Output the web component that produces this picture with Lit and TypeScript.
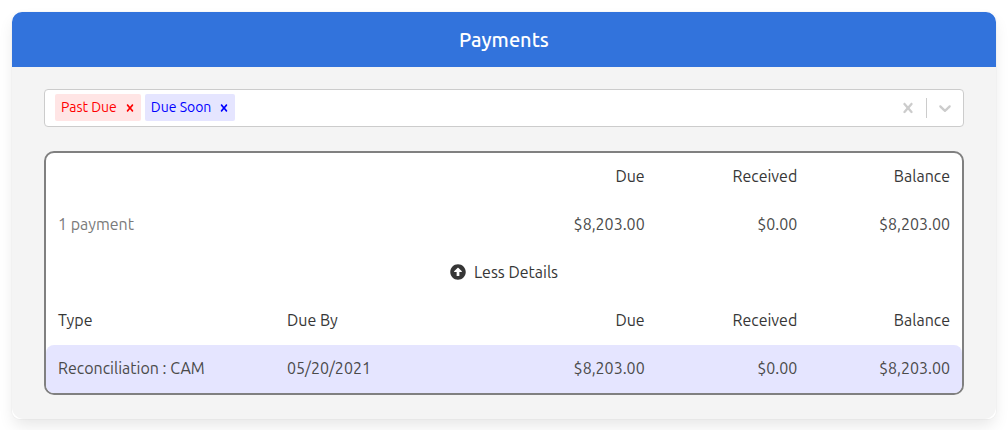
import { LitElement, html, css, svg } from "lit";
import { customElement, property, state } from "lit/decorators.js";

const cross = svg`<path d="M14.348 14.849c-0.469 0.469-1.229 0.469-1.697 0l-2.651-3.030-2.651 3.029c-0.469 0.469-1.229 0.469-1.697 0-0.469-0.469-0.469-1.229 0-1.697l2.758-3.15-2.759-3.152c-0.469-0.469-0.469-1.228 0-1.697s1.228-0.469 1.697 0l2.652 3.031 2.651-3.031c0.469-0.469 1.228-0.469 1.697 0s0.469 1.229 0 1.697l-2.758 3.152 2.758 3.15c0.469 0.469 0.469 1.229 0 1.698z"/>`;
const chevron = svg`<path d="M4.516 7.548c0.436-0.446 1.043-0.481 1.576 0l3.908 3.747 3.908-3.747c0.533-0.481 1.141-0.446 1.574 0 0.436 0.445 0.408 1.197 0 1.615-0.406 0.418-4.695 4.502-4.695 4.502-0.217 0.223-0.502 0.335-0.787 0.335s-0.57-0.112-0.789-0.335c0 0-4.287-4.084-4.695-4.502s-0.436-1.17 0-1.615z"/>`;

interface Filter {
  label: string;
  tone: "late" | "soon";
}

@customElement("payment-filter")
class PaymentFilter extends LitElement {
  @property({ attribute: false }) filters: Filter[] = [];

  static styles = css`
    :host {
      display: block;
    }
    .control {
      display: flex;
      align-items: center;
      min-height: 36px;
      border: 1px solid #ccc;
      border-radius: 4px;
      background: #fff;
    }
    .values {
      display: flex;
      flex: 1;
      flex-wrap: wrap;
      align-items: center;
      gap: 4px;
      padding: 4px 10px 5px;
      min-width: 0;
    }
    .chip {
      display: flex;
      border-radius: 2px;
      font-size: 14px;
      line-height: 21px;
    }
    .late {
      background: #ffe5e5;
      color: #f00;
    }
    .soon {
      background: #e5e5ff;
      color: #00f;
    }
    .label {
      padding: 3px 2px 3px 6px;
    }
    button {
      display: flex;
      align-items: center;
      border: 0;
      background: none;
      color: inherit;
      cursor: pointer;
    }
    .remove {
      padding: 0 4px;
    }
    .indicator {
      padding: 8px;
      color: #ccc;
    }
    svg {
      display: block;
      fill: currentColor;
    }
    .divider {
      align-self: stretch;
      width: 1px;
      margin: 8px 0;
      background: #ccc;
    }
    .search {
      flex: 1;
      min-width: 2px;
      padding: 0;
      border: 0;
      outline: 0;
      background: none;
      font: inherit;
      line-height: 20px;
      height: 20px;
    }
  `;

  private keep(filters: Filter[]) {
    this.filters = filters;
  }

  render() {
    return html`
      <div class="control">
        <div class="values">
          ${this.filters.map(
            (f) => html`
              <div class="chip ${f.tone}">
                <span class="label">${f.label}</span>
                <button
                  class="remove"
                  aria-label="Remove ${f.label}"
                  @click=${() => this.keep(this.filters.filter((o) => o !== f))}
                >
                  <svg width="14" height="14" viewBox="0 0 20 20">${cross}</svg>
                </button>
              </div>
            `
          )}
          <input class="search" type="text" role="combobox" aria-expanded="false" aria-label="Filter payments" />
        </div>
        <button class="indicator" aria-label="Clear filters" @click=${() => this.keep([])}>
          <svg width="20" height="20" viewBox="0 0 20 20">${cross}</svg>
        </button>
        <span class="divider"></span>
        <button class="indicator" aria-label="Show filters">
          <svg width="20" height="20" viewBox="0 0 20 20">${chevron}</svg>
        </button>
      </div>
    `;
  }
}

@customElement("app-root")
class AppRoot extends LitElement {
  @state() private open = true;

  private filters: Filter[] = [
    { label: "Past Due", tone: "late" },
    { label: "Due Soon", tone: "soon" },
  ];

  private payments = [
    { type: "Reconciliation : CAM", by: "05/20/2021", due: "$8,203.00", received: "$0.00", balance: "$8,203.00" },
  ];

  static styles = css`
    :host {
      display: block;
      padding: 12px;
      font-family: Ubuntu, "Noto Sans", sans-serif;
      font-size: 16px;
      line-height: 24px;
      color: #4a4a4a;
      text-rendering: optimizeLegibility;
    }
    .card {
      border-radius: 8px;
      background: #fff;
      box-shadow: 0 8px 16px -2px rgba(10, 10, 10, 0.1), 0 0 0 1px rgba(10, 10, 10, 0.02);
    }
    .title {
      margin: 0;
      padding: 14px 16px;
      border-radius: 10px 10px 0 0;
      background: #3273dc;
      color: #fff;
      font-size: 20px;
      font-weight: 500;
      line-height: 27px;
      text-align: center;
    }
    .body {
      display: flex;
      flex-direction: column;
      gap: 24px;
      padding: 22px 32px 24px;
      border-radius: 0 0 12px 12px;
      background: #f4f4f4;
    }
    .box {
      border: 2px solid #808080;
      border-radius: 10px;
      background: #fff;
    }
    table {
      width: 100%;
      table-layout: fixed;
      border-collapse: separate;
      border-spacing: 0;
    }
    .wide {
      width: 25%;
    }
    th,
    td {
      padding: 11px 12px 13px;
      text-align: left;
      font-weight: 400;
    }
    th {
      color: #363636;
    }
    .amount {
      text-align: right;
    }
    .count {
      color: #7a7a7a;
    }
    .soon td {
      background: #e5e5ff;
    }
    .soon td:first-child {
      border-radius: 8px 0 0 8px;
    }
    .soon td:last-child {
      border-radius: 0 8px 8px 0;
    }
    .toggle {
      display: flex;
      align-items: center;
      justify-content: center;
      gap: 8px;
      width: 100%;
      padding: 11px 12px 13px;
      border: 0;
      background: none;
      color: #363636;
      font: inherit;
      cursor: pointer;
    }
    .toggle svg {
      fill: currentColor;
    }
  `;

  private columns() {
    return html`<colgroup>
      <col class="wide" />
      <col class="wide" />
      <col />
      <col />
      <col />
    </colgroup>`;
  }

  render() {
    return html`
      <section class="card">
        <h2 class="title">Payments</h2>
        <div class="body">
          <payment-filter .filters=${this.filters}></payment-filter>
          <div class="box">
            <table>
              ${this.columns()}
              <thead>
                <tr>
                  <td colspan="2"></td>
                  <th class="amount" scope="col">Due</th>
                  <th class="amount" scope="col">Received</th>
                  <th class="amount" scope="col">Balance</th>
                </tr>
              </thead>
              <tbody>
                <tr>
                  <td class="count" colspan="2">1 payment</td>
                  <td class="amount">$8,203.00</td>
                  <td class="amount">$0.00</td>
                  <td class="amount">$8,203.00</td>
                </tr>
              </tbody>
            </table>
            <button class="toggle" aria-expanded=${this.open} @click=${() => (this.open = !this.open)}>
              <svg width="16" height="16" viewBox="0 0 512 512">
                <path
                  d="M8 256C8 119 119 8 256 8s248 111 248 248-111 248-248 248S8 393 8 256zm292 116V256h70.9c10.7 0 16.1-13 8.5-20.5L264.5 121.2c-4.7-4.7-12.2-4.7-16.9 0l-115 114.3c-7.6 7.6-2.2 20.5 8.5 20.5H212v116c0 6.6 5.4 12 12 12h64c6.6 0 12-5.4 12-12z"
                />
              </svg>
              <span>${this.open ? "Less Details" : "More Details"}</span>
            </button>
            ${this.open
              ? html`<table>
                  ${this.columns()}
                  <thead>
                    <tr>
                      <th scope="col">Type</th>
                      <th scope="col">Due By</th>
                      <th class="amount" scope="col">Due</th>
                      <th class="amount" scope="col">Received</th>
                      <th class="amount" scope="col">Balance</th>
                    </tr>
                  </thead>
                  <tbody>
                    ${this.payments.map(
                      (p) => html`<tr class="soon">
                        <td>${p.type}</td>
                        <td>${p.by}</td>
                        <td class="amount">${p.due}</td>
                        <td class="amount">${p.received}</td>
                        <td class="amount">${p.balance}</td>
                      </tr>`
                    )}
                  </tbody>
                </table>`
              : ""}
          </div>
        </div>
      </section>
    `;
  }
}
